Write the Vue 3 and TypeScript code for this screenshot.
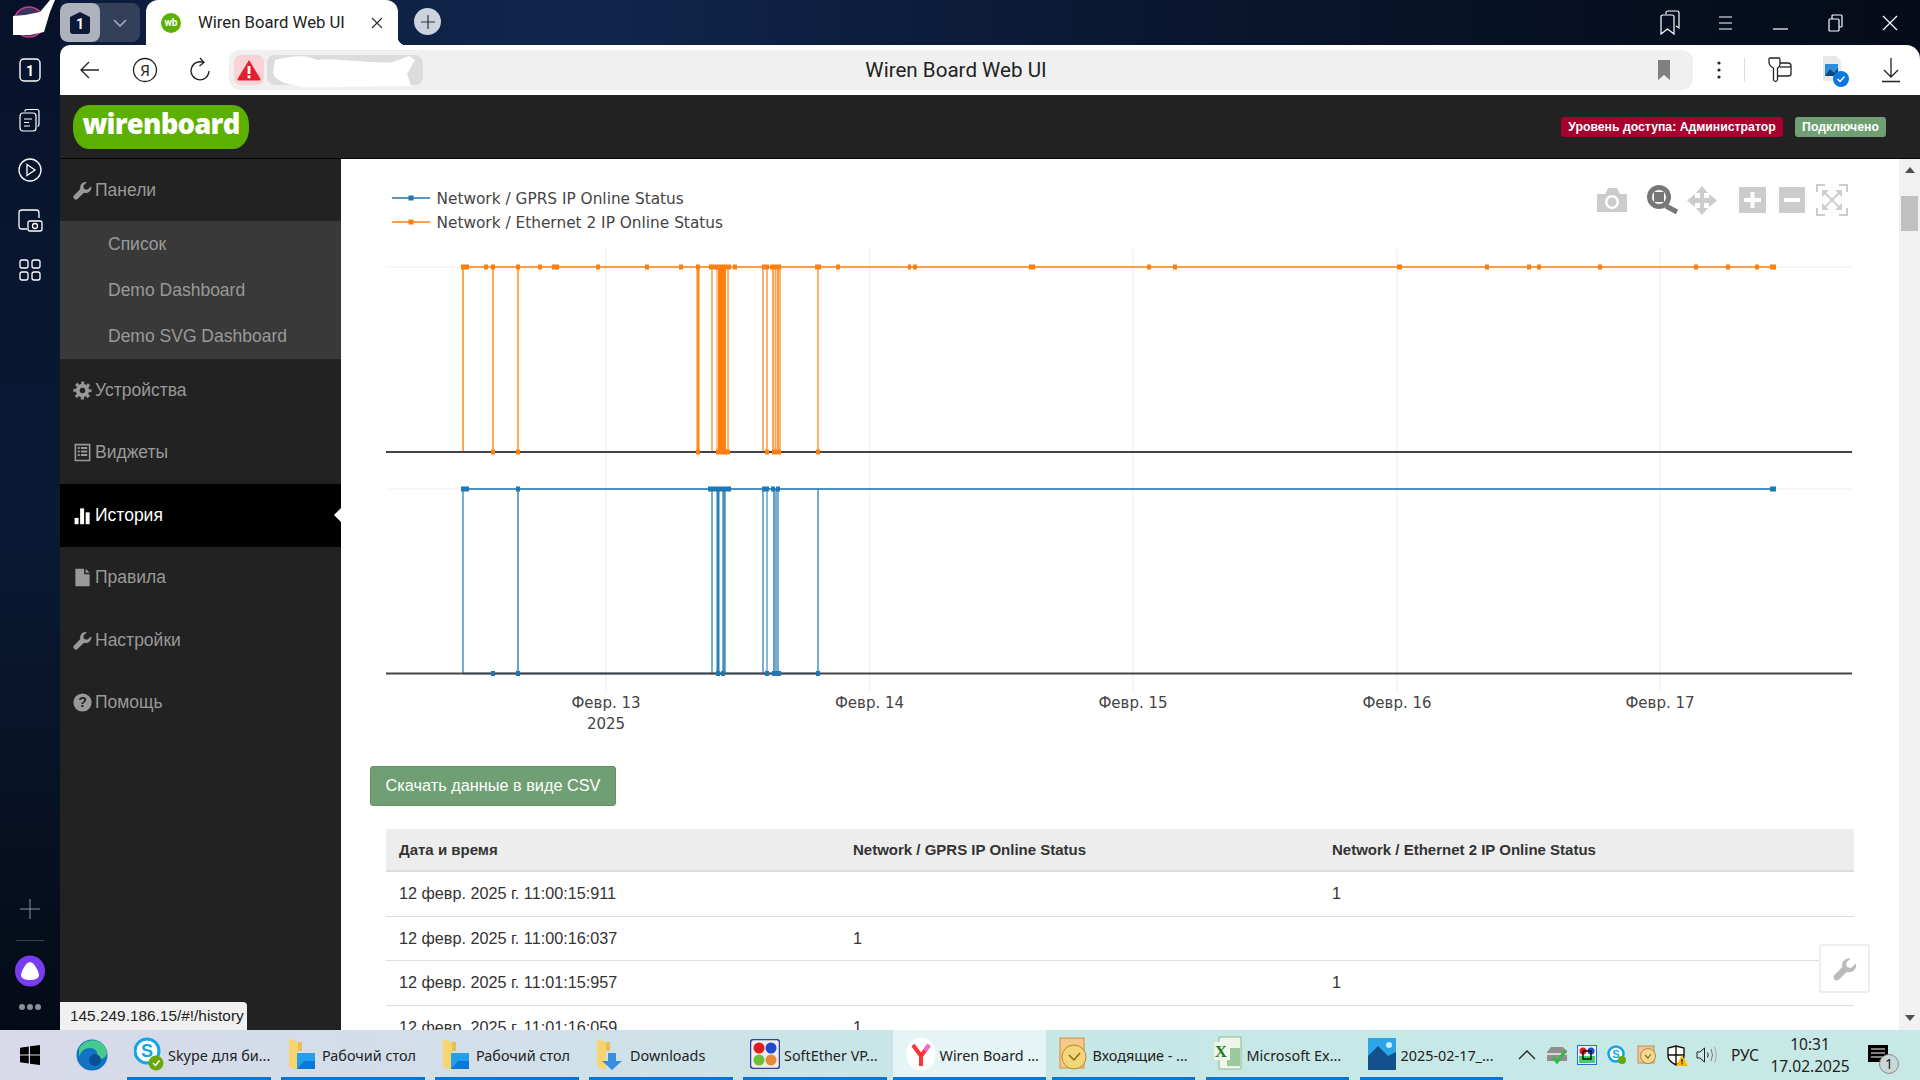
<template>
  <div class="screen">
    <div class="workspace">
      <!-- left rail of the browser -->
      <aside class="rail">
        <div class="rail-top">
          <svg class="rail-ico" width="26" height="26" viewBox="0 0 26 26"><rect x="3" y="2" width="20" height="22" rx="4" fill="none" stroke="#fff" stroke-width="1.4"/><text x="13" y="18.5" text-anchor="middle" class="rail-num">1</text></svg>
          <svg class="rail-ico" width="26" height="26" viewBox="0 0 26 26" fill="none" stroke="#fff" stroke-width="1.2"><path d="M8 4.500 Q8 2.500 10 2.500 H20 Q22 2.500 22 4.500 V17 Q22 19 20.500 19.500"/><rect x="3" y="6" width="16" height="18" rx="3" fill="#07122a"/><path d="M7 12h8M7 15.500h5M7 19h6"/></svg>
          <svg class="rail-ico" width="26" height="26" viewBox="0 0 26 26" fill="none" stroke="#fff" stroke-width="1.3"><circle cx="13" cy="13" r="11"/><path d="M10 7.500 L18 13 L10 18.500 Z"/></svg>
          <svg class="rail-ico" width="26" height="26" viewBox="0 0 26 26" fill="none" stroke="#fff" stroke-width="1.3"><path d="M10 22 H5 Q2 22 2 19 V6 Q2 3 5 3 H19 Q22 3 22 6 V11"/><rect x="11" y="14" width="14" height="10" rx="2" fill="#07122a"/><circle cx="18" cy="19" r="2.500"/></svg>
          <svg class="rail-ico" width="26" height="26" viewBox="0 0 26 26" fill="none" stroke="#fff" stroke-width="1.3"><rect x="3" y="3" width="8" height="8" rx="2"/><rect x="15" y="3" width="8" height="8" rx="2"/><rect x="3" y="15" width="8" height="8" rx="2"/><rect x="15" y="15" width="8" height="8" rx="2"/></svg>
        </div>
        <div class="rail-bottom">
          <svg width="22" height="22" viewBox="0 0 22 22" stroke="#8b93a3" stroke-width="1"><path d="M11 1v20M1 11h20"/></svg>
          <div class="rail-sep"></div>
          <svg width="32" height="32" viewBox="0 0 32 32"><ellipse cx="16" cy="16" rx="15" ry="15.500" fill="#7a3cf0"/><path d="M16 7 C20 7 25 17 25 20 C25 24 20 25 16 25 C12 25 7 24 7 20 C7 17 12 7 16 7 Z" fill="#fff"/></svg>
          <div class="rail-dots"><i></i><i></i><i></i></div>
        </div>
      </aside>

      <div class="browser">
        <div class="tabstrip">
          <div class="tabgroup">
            <div class="tabgroup-num">
              <svg width="22" height="24" viewBox="0 0 22 24"><path d="M11 1 L21 6 V20 Q21 23 18 23 H4 Q1 23 1 20 V6 Z" fill="#0c1a35"/><text x="11" y="18" text-anchor="middle" class="tab-num">1</text></svg>
            </div>
            <div class="tabgroup-arrow">
              <svg width="14" height="8" viewBox="0 0 14 8" fill="none" stroke="#aab2c2" stroke-width="1.500"><path d="M1 1 L7 7 L13 1"/></svg>
            </div>
          </div>
          <div class="tab">
            <span class="favicon">wb</span>
            <span class="tab-title">Wiren Board Web UI</span>
            <svg width="14" height="14" viewBox="0 0 14 14" stroke="#333" stroke-width="1.200"><path d="M2 2 L12 12 M12 2 L2 12"/></svg>
          </div>
          <div class="newtab">
            <svg width="16" height="16" viewBox="0 0 16 16" stroke="#333" stroke-width="1.200"><path d="M8 1v14M1 8h14"/></svg>
          </div>
          <div class="winctl">
            <svg width="22" height="26" viewBox="0 0 22 26" fill="none" stroke="#fff" stroke-width="1.200"><path d="M7 4 V2.500 Q7 1 9 1 H18 Q20 1 20 3 V18 L17 16"/><path d="M2 7 Q2 5 4 5 H13 Q15 5 15 7 V24 L8.500 19 L2 24 Z"/></svg>
            <svg width="20" height="16" viewBox="0 0 20 16" stroke="#fff" stroke-width="1.200"><path d="M3 2h13M3 8h13M3 14h13"/></svg>
            <svg width="20" height="16" viewBox="0 0 20 16" stroke="#fff" stroke-width="1.200"><path d="M2 14h15"/></svg>
            <svg width="20" height="18" viewBox="0 0 20 18" fill="none" stroke="#fff" stroke-width="1.200"><rect x="3" y="5" width="10" height="12" rx="1"/><path d="M6 5 V2 Q6 1 7 1 H15 Q16 1 16 2 V12 Q16 13 15 13 H13"/></svg>
            <svg width="18" height="18" viewBox="0 0 18 18" stroke="#fff" stroke-width="1.200"><path d="M2 2 L16 16 M16 2 L2 16"/></svg>
          </div>
        </div>

        <div class="toolbar">
          <svg class="tb-btn" width="22" height="20" viewBox="0 0 22 20" fill="none" stroke="#222" stroke-width="1.300"><path d="M20 10H2M10 2 L2 10 L10 18"/></svg>
          <svg class="tb-btn tb-ya" width="26" height="26" viewBox="0 0 26 26" fill="none" stroke="#222" stroke-width="1.300"><circle cx="13" cy="13" r="11.500"/><text x="13" y="19" text-anchor="middle" class="ya">Я</text></svg>
          <svg class="tb-btn tb-re" width="24" height="26" viewBox="0 0 24 26" fill="none" stroke="#222" stroke-width="1.300"><path d="M15.500 5.500 A9 9 0 1 0 21 14"/><path d="M12 1 L16 5.500 L11.500 9"/></svg>
          <div class="addr">
            <div class="addr-alert">
              <svg width="24" height="22" viewBox="0 0 24 22"><path d="M12 1 L23.500 20 Q24 21.500 22 21.500 H2 Q0 21.500 .5 20 Z" fill="#e3202e"/><rect x="10.600" y="7" width="2.800" height="8" fill="#fff"/><rect x="10.600" y="16.500" width="2.800" height="2.800" fill="#fff"/></svg>
            </div>
            <div class="addr-host">
              <svg width="156" height="36" viewBox="0 0 156 36"><path d="M8 8 C30 2 42 4 50 8 C70 6 110 12 126 10 L142 4 L148 8 L140 22 L144 34 C110 34 60 36 36 35 C20 32 8 30 6 20 Z" fill="#fff"/></svg>
            </div>
            <span class="addr-title">Wiren Board Web UI</span>
            <svg width="14" height="22" viewBox="0 0 14 22"><path d="M1 1 H13 V21 L7 16 L1 21 Z" fill="#808080"/></svg>
          </div>
          <div class="tb-right">
            <svg width="6" height="20" viewBox="0 0 6 20" fill="#222"><circle cx="3" cy="3" r="1.600"/><circle cx="3" cy="10" r="1.600"/><circle cx="3" cy="17" r="1.600"/></svg>
            <div class="tb-sep"></div>
            <svg width="26" height="28" viewBox="0 0 26 28" fill="none" stroke="#222" stroke-width="1.300"><path d="M4 2 H13 Q14 2 14 4 V8 Q14 11 11.500 12 V24 Q9.500 27 7.500 24 V12 Q3 10 3 6 V3 Q3 2 4 2 Z"/><path d="M14 7 H22 Q25 7 25 10 V18 Q25 20 22 20 H12"/><path d="M14 11 H25"/></svg>
            <svg class="tb-file" width="30" height="34" viewBox="0 0 30 34"><path d="M2 1 H15 L20 6 V26 H2 Z" fill="#e8e8e8"/><rect x="4" y="9" width="13" height="12" fill="#2b8fe0"/><path d="M4 21 L9 14 L13 18 L17 13 V21 Z" fill="#12447a"/><circle cx="20" cy="24" r="8" fill="#0a78e0"/><path d="M16.500 24 L19 26.500 L23.500 21.500" fill="none" stroke="#fff" stroke-width="1.500"/></svg>
            <svg width="20" height="26" viewBox="0 0 20 26" fill="none" stroke="#222" stroke-width="1.300"><path d="M10 1 V20 M3 13 L10 20 L17 13 M1 24.500 H19"/></svg>
          </div>
        </div>

        <div class="app">
          <header class="app-head">
            <div class="logo">wirenboard</div>
            <span class="badge badge-red">Уровень доступа: Администратор</span>
            <span class="badge badge-green">Подключено</span>
          </header>

          <div class="app-body">
            <nav class="sidebar">
              <template v-for="item in menu" :key="item.title">
                <a class="nav" :class="{ active: item.active }">
                  <svg v-if="item.icon === 'wrench'" class="nav-ico" viewBox="0 0 24 24"><path d="M23 6.500 L18 11 L14 10 L13 6 L17.500 1.500 A7 7 0 0 0 9.200 10 L1.500 18 A3 3 0 0 0 6 22.500 L14 14.800 A7 7 0 0 0 23 6.500 Z"/></svg>
                  <svg v-else-if="item.icon === 'cog'" class="nav-ico" viewBox="0 0 24 24" fill="none"><circle cx="12" cy="12" r="6" fill="none" stroke="currentColor" stroke-width="5"/><circle cx="12" cy="12" r="9.500" fill="none" stroke="currentColor" stroke-width="4" stroke-dasharray="3.700 3.760" stroke-dashoffset="1.800"/></svg>
                  <svg v-else-if="item.icon === 'list'" class="nav-ico" viewBox="0 0 24 24"><path fill-rule="evenodd" d="M2 1 H22 V23 H2 Z M4 3 V21 H20 V3 Z M6 5 H8.500 V7.500 H6 Z M10 5 H18 V7.500 H10 Z M6 9.500 H8.500 V12 H6 Z M10 9.500 H18 V12 H10 Z M6 14 H8.500 V16.500 H6 Z M10 14 H18 V16.500 H10 Z"/></svg>
                  <svg v-else-if="item.icon === 'stats'" class="nav-ico" viewBox="0 0 24 24"><rect x="2" y="15" width="5" height="8"/><rect x="9" y="3" width="5" height="20"/><rect x="16" y="8" width="5" height="15"/></svg>
                  <svg v-else-if="item.icon === 'file'" class="nav-ico" viewBox="0 0 24 24"><path d="M3 1 H14 V8 H21 V23 H3 Z M16 1 L21 6 H16 Z"/></svg>
                  <svg v-else class="nav-ico" viewBox="0 0 24 24"><circle cx="12" cy="12" r="11.500"/><text x="12" y="18" text-anchor="middle" class="nav-q">?</text></svg>
                  <span>{{ item.title }}</span>
                </a>
                <div v-if="item.children" class="subnav">
                  <a v-for="child in item.children" :key="child" class="subitem">{{ child }}</a>
                </div>
              </template>
            </nav>

            <main class="content">
              <svg class="chart" width="1558" height="590" viewBox="341 159 1558 590">
                <!-- legend -->
                <g v-for="l in legend" :key="l.label">
                  <line x1="392" x2="430" :y1="l.y" :y2="l.y" :stroke="l.color" stroke-width="2" opacity="0.75"/>
                  <rect x="408.500" :y="l.y - 2.500" width="5" height="5" :fill="l.color"/>
                  <text x="436.500" :y="l.y + 5.500" class="legend">{{ l.label }}</text>
                </g>

                <!-- modebar -->
                <g fill="#ccc">
                  <path d="M1597 194 H1605 L1608 188 H1617 L1620 194 H1627 V212 H1597 Z"/>
                  <circle cx="1612" cy="202" r="7" fill="#fff"/>
                  <circle cx="1612" cy="202" r="4.500"/>
                  <circle cx="1659" cy="197" r="9.500" fill="none" stroke="#777" stroke-width="5"/>
                  <rect x="1654" y="192" width="10" height="10" fill="#777"/>
                  <path d="M1666 206 L1677 212" stroke="#777" stroke-width="5"/>
                  <path d="M1702 186 L1708 193 H1704 V198 H1709 V194 L1717 200.500 L1709 207 V203 H1704 V208 H1708 L1702 215 L1696 208 H1700 V203 H1695 V207 L1687 200.500 L1695 194 V198 H1700 V193 H1696 Z"/>
                  <rect x="1739" y="187" width="27" height="26"/>
                  <path d="M1750.500 192 H1754.500 V198 H1761 V202 H1754.500 V208 H1750.500 V202 H1744 V198 H1750.500 Z" fill="#fff"/>
                  <rect x="1779" y="187" width="26" height="26"/>
                  <rect x="1784" y="198" width="16" height="4" fill="#fff"/>
                  <path d="M1817 192 V185 H1825 M1839 185 H1847 V192 M1847 208 V215 H1839 M1825 215 H1817 V208 M1824 192 L1840 208 M1840 192 L1824 208" fill="none" stroke="#ccc" stroke-width="2"/>
                  <path d="M1822 190 H1829 L1822 197 Z M1842 190 V197 L1835 190 Z M1842 210 H1835 L1842 203 Z M1822 210 V203 L1829 210 Z"/>
                </g>

                <!-- grid -->
                <line v-for="x in gridX" :key="x" :x1="x" :x2="x" y1="249" y2="692" stroke="#eee" stroke-width="1.200"/>
                <line x1="386" x2="1852" y1="267" y2="267" stroke="#eee"/>
                <line x1="386" x2="1852" y1="489" y2="489" stroke="#eee"/>

                <!-- ethernet -->
                <g stroke="#ff7f0e" fill="none">
                  <line x1="462" x2="1776" y1="267" y2="267" stroke-width="2" opacity="0.75"/>
                  <line x1="463" x2="818" y1="452" y2="452" stroke-width="2" opacity="0.6"/>
                  <line v-for="s in orangeLines" :key="s[0]" :x1="s[0]" :x2="s[0]" y1="267" y2="452" :stroke-width="s[1]" :opacity="s[2]"/>
                </g>
                <rect v-for="m in orangeTop" :key="'ot' + m[0]" :x="m[0]" y="264.500" :width="m[1] - m[0]" height="5" fill="#ff7f0e"/>

                <line x1="386" x2="1852" y1="452" y2="452" stroke="#444" stroke-width="2"/>
                <rect v-for="m in orangeBottom" :key="'ob' + m[0]" :x="m[0]" y="449.500" :width="m[1] - m[0]" height="5" fill="#ff7f0e"/>

                <!-- gprs -->
                <g stroke="#1f77b4" fill="none">
                  <line x1="462" x2="1776" y1="489" y2="489" stroke-width="2" opacity="0.8"/>
                  <line x1="463" x2="818" y1="673.500" y2="673.500" stroke-width="2" opacity="0.6"/>
                  <line v-for="s in blueLines" :key="s[0]" :x1="s[0]" :x2="s[0]" y1="489" y2="673" :stroke-width="s[1]" :opacity="s[2]"/>
                </g>
                <rect v-for="m in blueTop" :key="'bt' + m[0]" :x="m[0]" y="486.500" :width="m[1] - m[0]" height="5" fill="#1f77b4"/>
                <line x1="386" x2="1852" y1="673.500" y2="673.500" stroke="#444" stroke-width="2"/>
                <rect v-for="m in blueBottom" :key="'bb' + m[0]" :x="m[0]" y="671" :width="m[1] - m[0]" height="5" fill="#1f77b4"/>

                <!-- ticks -->
                <text v-for="t in ticks" :key="t.label" :x="t.x" y="708" text-anchor="middle" class="tick">{{ t.label }}</text>
                <text x="606" y="728.500" text-anchor="middle" class="tick">2025</text>
              </svg>

              <button class="csv">Скачать данные в виде CSV</button>

              <table class="data">
                <thead>
                  <tr>
                    <th class="c1">Дата и время</th>
                    <th class="c2">Network / GPRS IP Online Status</th>
                    <th>Network / Ethernet 2 IP Online Status</th>
                  </tr>
                </thead>
                <tbody>
                  <tr v-for="r in rows" :key="r.time">
                    <td>{{ r.time }}</td>
                    <td>{{ r.gprs }}</td>
                    <td>{{ r.eth }}</td>
                  </tr>
                </tbody>
              </table>

              <div class="fab">
                <svg width="24" height="24" viewBox="0 0 24 24" fill="#bbb"><path d="M23 6.500 L18 11 L14 10 L13 6 L17.500 1.500 A7 7 0 0 0 9.200 10 L1.500 18 A3 3 0 0 0 6 22.500 L14 14.800 A7 7 0 0 0 23 6.500 Z"/></svg>
              </div>
            </main>

            <div class="scrollbar">
              <i class="arrow-up"></i>
              <div class="thumb"></div>
              <i class="arrow-down"></i>
            </div>
          </div>
        </div>
      </div>

      <!-- painted over avatar in the corner -->
      <svg class="corner" width="60" height="40" viewBox="0 0 60 40"><circle cx="29" cy="22" r="15" fill="#3a3560" stroke="#d03a8a" stroke-width="1.500"/><path d="M13 16 L25 15 L40 12 L50 0 L55 0 L50 12 L44 32 L30 35 L13 35 Z" fill="#fff"/></svg>
      <div class="status">145.249.186.15/#!/history</div>
    </div>

    <footer class="taskbar">
      <div class="start">
        <svg width="20" height="20" viewBox="0 0 20 20" fill="#000"><path d="M0 2.800 L8.800 1.500 V9.500 H0 Z M10 1.300 L20 0 V9.500 H10 Z M0 10.500 H8.800 V18.500 L0 17.200 Z M10 10.500 H20 V20 L10 18.700 Z"/></svg>
      </div>
      <div class="edge">
        <svg width="32" height="32" viewBox="0 0 32 32"><circle cx="16" cy="16" r="15.500" fill="#1173c4"/><path d="M3 10 C8 -2 28 -2 31 13 C31 20 22 22 19 19 C24 15 20 9 14 9 C9 9 5 12 3 18 Z" fill="#46c98a"/><circle cx="19" cy="21" r="6" fill="#0b4f94"/></svg>
      </div>
      <div class="task-items">
        <div v-for="t in tasks" :key="t.key" class="task" :class="{ current: t.current }">
          <svg v-if="t.icon === 'skype'" class="task-ico" width="30" height="34" viewBox="0 0 30 34"><circle cx="13" cy="14" r="12" fill="#fff" stroke="#12a5e8" stroke-width="3"/><text x="13" y="20" text-anchor="middle" class="s-glyph">S</text><circle cx="22" cy="26" r="7.500" fill="#6aa80a"/><path d="M19 26 L21.500 28.500 L25.500 23.500" fill="none" stroke="#fff" stroke-width="1.500"/></svg>
          <svg v-else-if="t.icon === 'folder'" class="task-ico" width="30" height="34" viewBox="0 0 30 34"><path d="M1 2 L10 5 V33 L1 30 Z" fill="#f6d56e"/><path d="M10 5 H14 V14 H10 Z" fill="#e8bf55"/><rect x="9" y="16" width="18" height="16" fill="#22a0ee"/><path d="M9 32 L16 24 H27 V32 Z" fill="#0a78d8"/></svg>
          <svg v-else-if="t.icon === 'down'" class="task-ico" width="30" height="34" viewBox="0 0 30 34"><path d="M1 2 L10 5 V33 L1 30 Z" fill="#f6d56e"/><path d="M10 5 H14 V14 H10 Z" fill="#e8bf55"/><path d="M12 16 H20 V24 H26 L16 33 L6 24 H12 Z" fill="#3a8ee0"/></svg>
          <svg v-else-if="t.icon === 'softether'" class="task-ico" width="30" height="30" viewBox="0 0 30 30"><rect x=".5" y=".5" width="29" height="29" rx="3" fill="#eee" stroke="#3a3f9a" stroke-width="1.500"/><circle cx="9" cy="9" r="5.500" fill="#e21d1d"/><circle cx="21" cy="9" r="5.500" fill="#1d4ccf"/><circle cx="9" cy="21" r="5.500" fill="#6cbf3a"/><circle cx="21" cy="21" r="5.500" fill="#e88a3a"/></svg>
          <svg v-else-if="t.icon === 'yandex'" class="task-ico" width="30" height="34" viewBox="0 0 30 34"><ellipse cx="15" cy="17" rx="14.500" ry="16.500" fill="#fff"/><path d="M7 8 L15 19 L23 8" fill="none" stroke="#f33" stroke-width="4"/><path d="M15 18 V29" stroke="#f33" stroke-width="4"/><path d="M23 8 L19 13.500" stroke="#f6c" stroke-width="4"/></svg>
          <svg v-else-if="t.icon === 'mail'" class="task-ico" width="30" height="34" viewBox="0 0 30 34"><rect x="1" y="1" width="24" height="30" fill="#f8c88a" stroke="#d08a3a"/><circle cx="15" cy="20" r="12" fill="#f4d67a" stroke="#b98a2a"/><path d="M10 18 L15 23 L21 16" fill="none" stroke="#8a6a1a" stroke-width="1.500"/></svg>
          <svg v-else-if="t.icon === 'excel'" class="task-ico" width="30" height="36" viewBox="0 0 30 36"><path d="M6 1 H28 V33 H6 Z" fill="#eef6ea" stroke="#8bb88a"/><path d="M14 12 H27 V30 H14 Z" fill="#9cc89c"/><path d="M1 6 H17 V24 H1 Z" fill="#eef6ea"/><text x="8" y="21" text-anchor="middle" class="x-glyph">X</text></svg>
          <svg v-else class="task-ico" width="30" height="32" viewBox="0 0 30 32"><rect x="1" width="28" height="32" fill="#2aa6e8"/><path d="M1 32 V18 L11 8 L21 18 L29 14 V32 Z" fill="#12508e"/><circle cx="22" cy="7" r="3" fill="#cfeefc"/></svg>
          <span class="task-label">{{ t.label }}</span>
        </div>
      </div>

      <div class="tray">
        <div class="tray-ico"><svg width="18" height="12" viewBox="0 0 18 12" fill="none" stroke="#222" stroke-width="1.300"><path d="M1 10 L9 2 L17 10"/></svg></div>
        <div class="tray-ico"><svg width="22" height="18" viewBox="0 0 22 18"><path d="M1 6 L5 1 H17 L21 6 V15 H1 Z" fill="#8f8f8f"/><rect x="1" y="7" width="20" height="2" fill="#d8d8d8"/><path d="M7 11 L11 16 L20 4" fill="none" stroke="#39b54a" stroke-width="3"/></svg></div>
        <div class="tray-ico"><svg width="20" height="20" viewBox="0 0 20 20"><rect x=".5" y=".5" width="19" height="19" fill="#eef" stroke="#2a6ae0"/><circle cx="6" cy="6" r="3.500" fill="#e21d1d"/><circle cx="14" cy="6" r="3.500" fill="#1d4ccf"/><rect x="2" y="11" width="16" height="7" fill="#3fd06a"/><rect x="6" y="6" width="8" height="8" fill="none" stroke="#111" stroke-width="1.500"/></svg></div>
        <div class="tray-ico"><svg width="20" height="20" viewBox="0 0 20 20"><circle cx="9" cy="9" r="7.500" fill="#fff" stroke="#12a5e8" stroke-width="2.500"/><text x="9" y="13" text-anchor="middle" class="s-small">S</text><circle cx="15" cy="15" r="4" fill="#6aa80a"/></svg></div>
        <div class="tray-ico"><svg width="20" height="20" viewBox="0 0 20 20"><rect x="1" y="1" width="16" height="17" fill="#f2c49a" stroke="#c98a50"/><circle cx="11" cy="11" r="7.500" fill="#f2d894" stroke="#b98a2a"/><path d="M8 10 L11 13 L14 9" fill="none" stroke="#8a6a1a" stroke-width="1.200"/></svg></div>
        <div class="tray-ico"><svg width="22" height="21" viewBox="0 0 22 21"><path d="M10 1 L18 3 V11 Q18 16 10 20 Q2 16 2 11 V3 Z" fill="#fff" stroke="#111" stroke-width="1.400"/><path d="M10 1 V20 M2 10 H18" stroke="#111" stroke-width="1.400"/><path d="M16 10 L22 21 H10 Z" fill="#fcb900"/><rect x="15.400" y="14" width="1.200" height="3.500" fill="#111"/><rect x="15.400" y="18.200" width="1.200" height="1.200" fill="#111"/></svg></div>
        <div class="tray-ico"><svg width="22" height="18" viewBox="0 0 22 18" fill="none" stroke="#222" stroke-width="1"><path d="M1 6 H4 L8.500 2 V16 L4 12 H1 Z"/><path d="M11.500 6.500 Q13 9 11.500 11.500"/><path d="M15 3 Q18 9 15 15" stroke="#777"/><path d="M18.500 1 Q22 9 18.500 17" stroke="#aaa"/></svg></div>
        <div class="tray-lang">РУС</div>
        <div class="tray-clock"><span>10:31</span><span>17.02.2025</span></div>
        <div class="tray-note">
          <svg width="20" height="17" viewBox="0 0 20 17"><rect width="20" height="17" fill="#000"/><path d="M3 4h14M3 8h14M3 12h14" stroke="#fff" stroke-width="1.200"/></svg>
          <span class="note-badge">1</span>
        </div>
      </div>
    </footer>
  </div>
</template>

<script setup lang="ts">
interface MenuItem {
  title: string
  icon: string
  active?: boolean
  children?: string[]
}

const menu: MenuItem[] = [
  { title: 'Панели', icon: 'wrench', children: ['Список', 'Demo Dashboard', 'Demo SVG Dashboard'] },
  { title: 'Устройства', icon: 'cog' },
  { title: 'Виджеты', icon: 'list' },
  { title: 'История', icon: 'stats', active: true },
  { title: 'Правила', icon: 'file' },
  { title: 'Настройки', icon: 'wrench' },
  { title: 'Помощь', icon: 'help' },
]

const legend = [
  { label: 'Network / GPRS IP Online Status', y: 198, color: '#1f77b4' },
  { label: 'Network / Ethernet 2 IP Online Status', y: 222, color: '#ff7f0e' },
]

const gridX = [606, 869.5, 1133, 1397, 1660]

const ticks = [
  { label: 'Февр. 13', x: 606 },
  { label: 'Февр. 14', x: 869.5 },
  { label: 'Февр. 15', x: 1133 },
  { label: 'Февр. 16', x: 1397 },
  { label: 'Февр. 17', x: 1660 },
]

// [x, stroke width, opacity]
const orangeLines: number[][] = [
  [463, 2, 0.7], [493, 1.5, 0.9], [518, 1.5, 0.9], [698, 3, 0.95], [712, 1.5, 0.8],
  [717, 1.5, 0.6], [719.5, 1.5, 0.6], [722, 8, 1], [728, 2, 0.6], [763, 2, 0.6],
  [767, 2, 0.6], [773, 2, 0.7], [775.5, 2, 0.7], [778, 2, 0.8], [780, 2, 0.6], [818, 1.5, 0.8],
]

const blueLines: number[][] = [
  [463, 2, 0.6], [518, 1.5, 0.9], [712, 1.5, 0.8], [718, 3, 0.95], [723, 1.5, 0.8],
  [724.5, 2.5, 0.8], [763, 2, 0.6], [767, 1.5, 0.7], [774, 2, 0.7], [776, 2, 0.6],
  [778, 2, 0.6], [818, 1.5, 0.8],
]

// [from, to] of marker clusters
const orangeTop: number[][] = [
  [461, 469], [484, 488], [491, 495], [516, 520], [538, 542], [552, 559], [596, 600],
  [645, 649], [679, 683], [696, 700], [709, 731], [733, 737], [762, 769], [770, 781],
  [815, 821], [836, 840], [908, 911], [913, 917], [1029, 1035], [1147, 1151], [1173, 1177],
  [1397, 1402], [1485, 1489], [1527, 1531], [1537, 1541], [1598, 1602], [1694, 1698],
  [1726, 1730], [1755, 1759], [1770, 1776],
]

const orangeBottom: number[][] = [
  [491, 495], [516, 520], [696, 700], [716, 727], [726, 730], [765, 769], [772, 781], [816, 820],
]

const blueTop: number[][] = [
  [461, 469], [516, 520], [708, 731], [762, 769], [771, 775], [776, 780], [1770, 1776],
]

const blueBottom: number[][] = [
  [491, 495], [516, 520], [716, 720], [721, 725], [765, 769], [772, 781], [816, 820],
]

const rows = [
  { time: '12 февр. 2025 г. 11:00:15:911', gprs: '', eth: '1' },
  { time: '12 февр. 2025 г. 11:00:16:037', gprs: '1', eth: '' },
  { time: '12 февр. 2025 г. 11:01:15:957', gprs: '', eth: '1' },
  { time: '12 февр. 2025 г. 11:01:16:059', gprs: '1', eth: '' },
]

const tasks = [
  { key: 'skype', label: 'Skype для би...', icon: 'skype' },
  { key: 'desk1', label: 'Рабочий стол', icon: 'folder' },
  { key: 'desk2', label: 'Рабочий стол', icon: 'folder' },
  { key: 'down', label: 'Downloads', icon: 'down' },
  { key: 'vpn', label: 'SoftEther VP...', icon: 'softether' },
  { key: 'wb', label: 'Wiren Board ...', icon: 'yandex', current: true },
  { key: 'mail', label: 'Входящие - ...', icon: 'mail' },
  { key: 'xls', label: 'Microsoft Ex...', icon: 'excel' },
  { key: 'img', label: '2025-02-17_...', icon: 'image' },
]
</script>

<style scoped>
.screen {
  width: 1920px;
  height: 1080px;
  display: flex;
  flex-direction: column;
  overflow: hidden;
  font-family: "Liberation Sans", Arial, sans-serif;
}

.workspace {
  position: relative;
  height: 1030px;
  display: flex;
  background: linear-gradient(90deg, #0b1a38 0%, #10264c 30%, #0a1730 60%, #050b18 100%);
}

.rail {
  width: 60px;
  flex: none;
  display: flex;
  flex-direction: column;
  justify-content: space-between;
  align-items: center;
  background: linear-gradient(180deg, #07122a 0%, #0a1a35 50%, #050b16 100%);
}
.rail-top {
  padding-top: 57px;
  display: flex;
  flex-direction: column;
  gap: 24px;
}
.rail-ico { display: block; }
.rail-num { font: 700 14px "Roboto", sans-serif; fill: #fff; stroke: none; }
.rail-bottom {
  padding-bottom: 20px;
  display: flex;
  flex-direction: column;
  align-items: center;
}
.rail-sep { width: 28px; height: 1px; background: #3a4252; margin: 20px 0 14px; }
.rail-dots { display: flex; gap: 2px; margin-top: 17px; }
.rail-dots i { width: 6px; height: 6px; border-radius: 50%; background: #8b8f98; }

.browser {
  flex: 1;
  min-width: 0;
  display: flex;
  flex-direction: column;
}

.tabstrip {
  height: 45px;
  display: flex;
  align-items: flex-start;
  flex: none;
}
.tabgroup {
  display: flex;
  width: 80px;
  height: 39px;
  margin-top: 3px;
  border-radius: 8px;
  overflow: hidden;
  background: #34405a;
}
.tabgroup-num {
  width: 40px;
  background: #adb2bd;
  border-radius: 8px;
  display: flex;
  align-items: center;
  justify-content: center;
}
.tab-num { font: 700 14px "Roboto", sans-serif; fill: #fff; }
.tabgroup-arrow {
  flex: 1;
  display: flex;
  align-items: center;
  justify-content: center;
}
.tab {
  position: relative;
  width: 252px;
  height: 45px;
  margin-left: 6px;
  background: #fff;
  border-radius: 12px 12px 0 0;
  display: flex;
  align-items: center;
  padding: 0 14px 0 15px;
  box-sizing: border-box;
}
.tab::after {
  content: "";
  position: absolute;
  right: -8px;
  bottom: 0;
  width: 8px;
  height: 8px;
  background: radial-gradient(circle at 100% 0, transparent 8px, #fff 8.5px);
}
.favicon {
  width: 20px;
  height: 20px;
  border-radius: 50%;
  background: #5cb000;
  color: #fff;
  font: 700 10px "Roboto", sans-serif;
  display: flex;
  align-items: center;
  justify-content: center;
  flex: none;
}
.tab-title {
  flex: 1;
  margin-left: 17px;
  font: 16.7px "Roboto", sans-serif;
  color: #222;
  white-space: nowrap;
}
.newtab {
  width: 27px;
  height: 27px;
  margin: 8px 0 0 16px;
  border-radius: 50%;
  background: #ccd2de;
  display: flex;
  align-items: center;
  justify-content: center;
}
.winctl {
  margin-left: auto;
  height: 45px;
  padding-right: 21px;
  display: flex;
  align-items: center;
  gap: 35px;
}

.toolbar {
  position: relative;
  height: 50px;
  flex: none;
  background: #fff;
  border-radius: 10px 14px 0 0;
  display: flex;
  align-items: center;
  padding: 0 16px 0 19px;
  box-sizing: border-box;
}
.tb-ya { margin-left: 31px; }
.tb-re { margin-left: 30px; }
.addr {
  width: 1464px;
  height: 40px;
  margin-left: 17px;
  background: #f0f0f0;
  border-radius: 11px;
  display: flex;
  align-items: center;
  padding: 0 22px 0 5px;
  box-sizing: border-box;
  position: relative;
  flex: none;
}
.addr-alert {
  width: 30px;
  height: 30px;
  border-radius: 7px;
  background: #fbd2d5;
  display: flex;
  align-items: center;
  justify-content: center;
}
.addr-host {
  width: 156px;
  height: 30px;
  margin-left: 3px;
  background: #dcdcdc;
  border-radius: 8px;
  position: relative;
}
.addr-host svg { position: absolute; left: 0; top: -3px; }
.addr-title {
  flex: 1;
  text-align: center;
  margin-right: 168px;
  font: 20.6px "Roboto", sans-serif;
  color: #222;
  white-space: nowrap;
}
.tb-right {
  flex: 1;
  height: 40px;
  display: flex;
  align-items: center;
  padding-left: 23px;
}
.tb-sep { width: 1px; height: 24px; background: #ddd; margin: 0 21px 0 22px; }
.tb-file { margin: 4px 30px 0 29px; }

.app {
  flex: 1;
  min-height: 0;
  display: flex;
  flex-direction: column;
}
.app-head {
  height: 64px;
  flex: none;
  box-sizing: border-box;
  background: #222;
  border-bottom: 1px solid #080808;
  display: flex;
  align-items: center;
  padding: 0 34px 0 13px;
  gap: 12px;
}
.logo {
  width: 176px;
  height: 44px;
  margin-right: auto;
  background: #5cb000;
  border-radius: 16px / 20px;
  color: #fff;
  font: 800 27.5px/38px "Open Sans", sans-serif;
  letter-spacing: -0.8px;
  text-align: center;
}
.badge {
  height: 20px;
  border-radius: 3px;
  color: #fff;
  font: 700 12.25px/20px "Liberation Sans", Arial, sans-serif;
  text-align: center;
  white-space: nowrap;
}
.badge-red { width: 222px; background: #a8002c; }
.badge-green { width: 91px; background: #6f9f73; }

.app-body {
  flex: 1;
  min-height: 0;
  display: flex;
}
.sidebar {
  width: 281px;
  flex: none;
  background: #222;
  font-size: 17.5px;
}
.nav {
  height: 62.4px;
  display: flex;
  align-items: center;
  padding-left: 13px;
  color: #999;
}
.nav.active {
  background: #000;
  color: #fff;
  position: relative;
}
.nav.active::after {
  content: "";
  position: absolute;
  right: 0;
  top: 24px;
  border: 7px solid transparent;
  border-right-color: #fff;
  border-left-width: 0;
}
.nav-ico {
  width: 19px;
  height: 19px;
  margin-right: 3px;
  fill: currentColor;
  flex: none;
}
.nav-q { font: 700 18px "Liberation Sans", sans-serif; fill: #222; }
.subnav {
  background: #393939;
  padding: 0;
}
.subitem {
  display: flex;
  align-items: center;
  height: 46px;
  padding-left: 48px;
  color: #999;
}

.content {
  position: relative;
  flex: 1;
  min-width: 0;
  background: #fff;
  overflow: hidden;
  color: #333;
}
.chart { display: block; }
.legend { font: 15.35px "DejaVu Sans", Verdana, sans-serif; fill: #444; }
.tick { font: 15px "DejaVu Sans", Verdana, sans-serif; fill: #444; }

.csv {
  display: block;
  width: 246px;
  height: 40px;
  margin: 17px 0 0 29px;
  padding: 0 0 2px;
  border: 1px solid #629165;
  border-radius: 3px;
  background: #709f74;
  color: #fff;
  font: 16.3px "Liberation Sans", Arial, sans-serif;
}
.data {
  width: 1468px;
  margin: 23px 0 0 45px;
  border-collapse: collapse;
  table-layout: fixed;
  font-size: 16.2px;
}
.data th {
  height: 41px;
  padding: 0 13px;
  background: #ededed;
  border-bottom: 2px solid #ddd;
  text-align: left;
  font-size: 15px;
  font-weight: 700;
}
.data .c1 { width: 428px; }
.data .c2 { width: 453px; }
.data td {
  height: 43.5px;
  padding: 0 13px;
  border-bottom: 1px solid #ddd;
}

.fab {
  position: absolute;
  left: 1478px;
  top: 785px;
  width: 51px;
  height: 49px;
  box-sizing: border-box;
  background: #fff;
  border: 2px solid #eee;
  border-radius: 3px;
  display: flex;
  align-items: center;
  justify-content: center;
}

.scrollbar {
  width: 21px;
  flex: none;
  position: relative;
  background: #f1f1f1;
  display: flex;
  flex-direction: column;
  align-items: center;
}
.thumb {
  position: absolute;
  left: 2px;
  top: 37px;
  width: 17px;
  height: 35px;
  background: #c0c0c0;
}
.arrow-up, .arrow-down {
  position: absolute;
  width: 0;
  height: 0;
  border-left: 5px solid transparent;
  border-right: 5px solid transparent;
}
.arrow-up { top: 8px; border-bottom: 6px solid #505050; }
.arrow-down { bottom: 9px; border-top: 6px solid #505050; }

.corner { position: absolute; left: 0; top: 0; }
.status {
  position: absolute;
  left: 60px;
  bottom: 0;
  width: 187px;
  height: 28px;
  box-sizing: border-box;
  padding-left: 10px;
  background: #f0f0f0;
  border-radius: 0 4px 0 0;
  color: #222;
  font: 15.4px/28px "Liberation Sans", Arial, sans-serif;
  white-space: nowrap;
}

.taskbar {
  height: 50px;
  flex: none;
  display: flex;
  background: linear-gradient(90deg, #d8d9e9 0%, #d2dfe9 25%, #c6e7e6 50%, #c7e9e6 100%);
  font: 14.4px "Noto Sans", "Open Sans", sans-serif;
  color: #222;
}
.start, .edge {
  display: flex;
  align-items: center;
  justify-content: center;
  flex: none;
}
.start { width: 60px; }
.edge { width: 64px; }
.task-items {
  display: flex;
  margin-left: 3px;
  gap: 10.5px;
}
.task {
  width: 143.5px;
  box-sizing: border-box;
  display: flex;
  align-items: center;
  padding-left: 7px;
  gap: 4px;
  border-bottom: 3px solid #0a78d0;
  white-space: nowrap;
  flex: none;
}
.task-label { padding-top: 3px; }
.task.current {
  width: 153px;
  margin: 0 -4.5px;
  padding-left: 13px;
  background: #e5f5f5;
}
.task-ico { flex: none; }

.tray {
  display: flex;
  align-items: center;
  margin-left: 9px;
  flex: 1;
  position: relative;
}
.tray-ico {
  width: 30px;
  display: flex;
  justify-content: center;
  flex: none;
}
.tray-lang { width: 46px; text-align: center; flex: none; font-size: 15.5px; }
.tray-clock {
  width: 84px;
  flex: none;
  display: flex;
  flex-direction: column;
  align-items: center;
  line-height: 22px;
  font-size: 15.5px;
}
.tray-note {
  position: relative;
  width: 54px;
  height: 50px;
  flex: none;
}
.tray-note svg { position: absolute; left: 16px; top: 15px; }
.note-badge {
  position: absolute;
  left: 27px;
  top: 24px;
  width: 20px;
  height: 20px;
  box-sizing: border-box;
  border: 1px solid #888;
  border-radius: 50%;
  background: #c9d8d6;
  text-align: center;
  font-size: 14px;
  line-height: 18px;
}
.s-glyph { font: 700 18px "Liberation Sans", sans-serif; fill: #12a5e8; }
.s-small { font: 700 11px "Liberation Sans", sans-serif; fill: #12a5e8; }
.x-glyph { font: 700 17px "Liberation Serif", serif; fill: #1d7a2e; }
.ya { font: 15px "Roboto", sans-serif; fill: #222; stroke: none; }
</style>

<style>
html, body {
  margin: 0;
  overflow: hidden;
}
</style>
